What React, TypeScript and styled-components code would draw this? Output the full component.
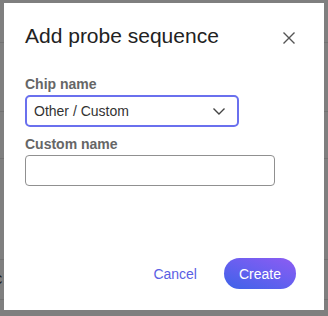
import styled, { createGlobalStyle } from 'styled-components'

const GlobalStyle = createGlobalStyle`
  html, body {
    margin: 0;
    padding: 0;
    background: #ffffff;
    font-family: 'Liberation Sans', Arial, sans-serif;
  }
`

const Page = styled.div`
  width: 328px;
  height: 316px;
  position: relative;
  overflow: hidden;
  background: #ffffff;
`

const PageRow = styled.div<{ $h: number }>`
  height: ${(p) => p.$h}px;
  border-bottom: 1px solid #e4e4e4;
  box-sizing: border-box;
  display: flex;
  align-items: center;
  font-size: 13px;
  color: #333;
`

const PageText = styled.span<{ $link?: boolean }>`
  margin-left: -7px;
  color: ${(p) => (p.$link ? '#3b4bd8' : '#333')};
`

const Overlay = styled.div`
  position: absolute;
  inset: 0;
  background: rgba(0, 0, 0, 0.5);
  padding: 3px 4px 6px;
  box-sizing: border-box;
  display: flex;
`

const Dialog = styled.div`
  flex: 1;
  background: #ffffff;
  padding: 21px 28px 21px 21px;
  box-sizing: border-box;
  display: flex;
  flex-direction: column;
`

const Header = styled.div`
  display: flex;
  align-items: center;
  justify-content: space-between;
  height: 24px;
`

const Title = styled.h2`
  margin: 0;
  font-size: 21px;
  font-weight: 400;
  line-height: 24px;
  color: #222;
`

const CloseButton = styled.button`
  border: none;
  background: none;
  padding: 0;
  width: 14px;
  height: 14px;
  margin-top: 4px;
  display: flex;
  align-items: center;
  justify-content: center;
  cursor: pointer;
`

const Label = styled.label<{ $top: number }>`
  display: block;
  margin-top: ${(p) => p.$top}px;
  font-size: 14px;
  font-weight: 700;
  line-height: 16px;
  color: #666;
`

const SelectBox = styled.div`
  margin-top: 3px;
  width: 214px;
  height: 32px;
  box-sizing: border-box;
  border: 2px solid #6a70ee;
  border-radius: 5px;
  display: flex;
  align-items: center;
  justify-content: space-between;
  padding: 0 12px 0 7px;
  font-size: 14px;
  color: #333;
`

const TextInput = styled.input`
  margin-top: 3px;
  width: 250px;
  height: 31px;
  box-sizing: border-box;
  border: 1px solid #909090;
  border-radius: 4px;
  padding: 0 8px;
  font-family: inherit;
  font-size: 14px;
  outline: none;
`

const Footer = styled.div`
  margin-top: auto;
  display: flex;
  justify-content: flex-end;
  align-items: center;
  gap: 27px;
`

const TextButton = styled.button`
  border: none;
  background: none;
  padding: 0;
  font-family: inherit;
  font-size: 14px;
  color: #5a60e4;
  cursor: pointer;
`

const PrimaryButton = styled.button`
  height: 31px;
  padding: 0 15px;
  border: none;
  border-radius: 16px;
  background: linear-gradient(20deg, #3d63e8 0%, #6a5ff0 55%, #8d5cf2 100%);
  color: #ffffff;
  font-family: inherit;
  font-size: 14px;
  cursor: pointer;
`

export default function App() {
  return (
    <>
      <GlobalStyle />
      <Page>
        <PageRow $h={43} />
        <PageRow $h={69}>
          <PageText $link>s</PageText>
        </PageRow>
        <PageRow $h={47} />
        <PageRow $h={101} />
        <PageRow $h={40}>
          <PageText>C</PageText>
        </PageRow>
        <Overlay>
          <Dialog>
            <Header>
              <Title>Add probe sequence</Title>
              <CloseButton aria-label="Close">
                <svg width="12" height="12" viewBox="0 0 12 12">
                  <path d="M0.5 0.5 L11.5 11.5 M11.5 0.5 L0.5 11.5" stroke="#555" strokeWidth="1.4" fill="none" />
                </svg>
              </CloseButton>
            </Header>
            <Label $top={28}>Chip name</Label>
            <SelectBox>
              <span>Other / Custom</span>
              <svg width="12" height="7" viewBox="0 0 12 7">
                <path d="M0.5 0.5 L6 6 L11.5 0.5" stroke="#444" strokeWidth="1.4" fill="none" />
              </svg>
            </SelectBox>
            <Label $top={9}>Custom name</Label>
            <TextInput />
            <Footer>
              <TextButton>Cancel</TextButton>
              <PrimaryButton>Create</PrimaryButton>
            </Footer>
          </Dialog>
        </Overlay>
      </Page>
    </>
  )
}
